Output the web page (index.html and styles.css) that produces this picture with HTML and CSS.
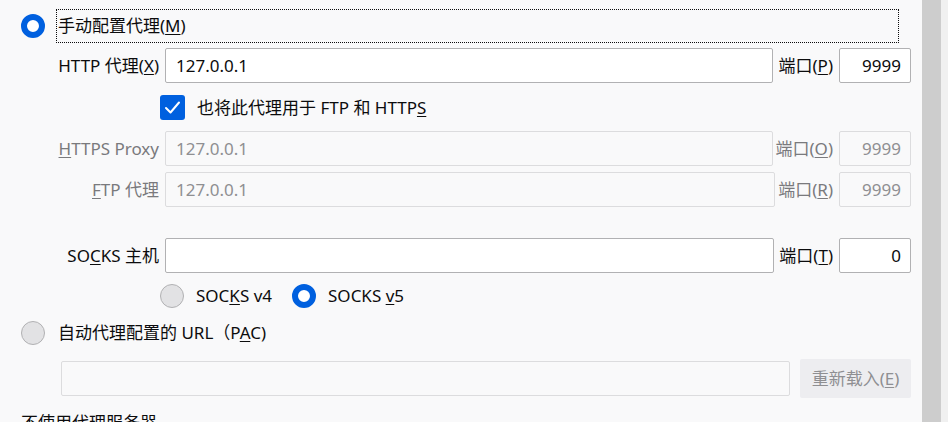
FILE: index.html
```html
<!DOCTYPE html>
<html lang="zh-CN">
<head>
<meta charset="utf-8">
<link rel="stylesheet" href="styles.css">
</head>
<body>
<div class="page">
  <div class="content">
    <div class="opt-row first">
      <span class="radio on"></span>
      <span class="focus-label">手动配置代理(<u>M</u>)</span>
    </div>

    <div class="field-row r-http">
      <label class="lbl">HTTP 代理(<u>X</u>)</label>
      <div class="input">127.0.0.1</div>
      <label class="plbl">端口(<u>P</u>)</label>
      <div class="input port">9999</div>
    </div>

    <div class="check-row">
      <span class="check">
        <svg width="17" height="15" viewBox="0 0 17 15"><path d="M2 8 L6.5 12.5 L15 2.5" fill="none" stroke="#fff" stroke-width="2" stroke-linecap="round" stroke-linejoin="round"/></svg>
      </span>
      <span>也将此代理用于 FTP 和 HTTP<u>S</u></span>
    </div>

    <div class="field-row r-https disabled">
      <label class="lbl"><u>H</u>TTPS Proxy</label>
      <div class="input">127.0.0.1</div>
      <label class="plbl">端口(<u>O</u>)</label>
      <div class="input port">9999</div>
    </div>

    <div class="field-row r-ftp disabled">
      <label class="lbl"><u>F</u>TP 代理</label>
      <div class="input">127.0.0.1</div>
      <label class="plbl">端口(<u>R</u>)</label>
      <div class="input port">9999</div>
    </div>

    <div class="field-row r-socks">
      <label class="lbl">SO<u>C</u>KS 主机</label>
      <div class="input"></div>
      <label class="plbl">端口(<u>T</u>)</label>
      <div class="input port">0</div>
    </div>

    <div class="socks-row">
      <span class="radio"></span>
      <span class="rtext">SOC<u>K</u>S v4</span>
      <span class="radio on"></span>
      <span class="rtext">SOCKS <u>v</u>5</span>
    </div>

    <div class="opt-row pac">
      <span class="radio"></span>
      <span class="plain-label">自动代理配置的 URL（P<u>A</u>C)</span>
    </div>

    <div class="pac-row">
      <div class="input dis-input"></div>
      <div class="btn">重新载入(<u>E</u>)</div>
    </div>

    <div class="cut-row">不使用代理服务器</div>
  </div>
  <div class="scrollbar"><div class="thumb"></div></div>
</div>
</body>
</html>
```

FILE: styles.css
```css
html, body {
  margin: 0;
  padding: 0;
  background: #f9f9fa;
  height: 422px;
  overflow: hidden;
}
body {
  font-family: "Noto Sans", "Noto Sans CJK SC", sans-serif;
  font-size: 17px;
  line-height: 22px;
  color: #0c0c0d;
}
u { text-decoration-thickness: 1px; text-underline-offset: 2px; }

.page {
  display: flex;
  width: 948px;
  height: 422px;
}
.content {
  width: 911px;
  padding-left: 21px;
  padding-top: 9px;
  box-sizing: border-box;
  flex: none;
}
.scrollbar {
  margin-left: 11px;
  width: 26px;
  background: #f0f0f0;
  display: flex;
}
.thumb {
  width: 19px;
  background: #cdcdcd;
}

.radio {
  width: 24px;
  height: 24px;
  border-radius: 50%;
  box-sizing: border-box;
  border: 1px solid #b1b1b3;
  background: #e2e2e4;
  flex: none;
  display: inline-block;
}
.radio.on {
  border: 6px solid #0060df;
  background: #fff;
}

.opt-row {
  display: flex;
  align-items: center;
  height: 34px;
}
.opt-row .radio { margin-right: 11px; }
.focus-label {
  flex: 1;
  height: 34px;
  box-sizing: border-box;
  border: 1px dotted #0c0c0d;
  display: flex;
  align-items: center;
  padding-left: 1px;
  margin-right: 12px;
}
.plain-label { padding-left: 2px; }

.field-row {
  display: flex;
  align-items: center;
  height: 35px;
}
.r-http { margin-top: 5px; }
.r-https { margin-top: 11px; }
.r-ftp { margin-top: 6px; }
.r-socks { margin-top: 31px; }

.lbl {
  width: 138px;
  text-align: right;
  margin-right: 6px;
  flex: none;
  white-space: nowrap;
}
.input {
  flex: 1;
  height: 35px;
  box-sizing: border-box;
  border: 1px solid #b1b1b3;
  border-radius: 2px;
  background: #fff;
  padding-left: 10px;
  display: flex;
  align-items: center;
}
.input.port {
  flex: none;
  width: 72px;
  justify-content: flex-end;
  padding-left: 0;
  padding-right: 9px;
}
.plbl {
  margin: 0 6px 0 5px;
  flex: none;
}
.disabled { color: #8f8f92; }
.disabled .plbl { margin-left: 3px; }
.disabled .input {
  border-color: #dcdcde;
  background: #f9f9fa;
}
.disabled .lbl, .disabled .plbl { color: #7a7a7d; }

.check-row {
  display: flex;
  align-items: center;
  height: 25px;
  margin-top: 12px;
  padding-left: 139px;
}
.check {
  width: 25px;
  height: 25px;
  box-sizing: border-box;
  background: #0060df;
  border-radius: 3px;
  display: flex;
  align-items: center;
  justify-content: center;
  margin-right: 12px;
}

.socks-row {
  display: flex;
  align-items: center;
  height: 24px;
  margin-top: 11px;
  padding-left: 139px;
}
.socks-row .radio { margin-right: 12px; }
.rtext { margin-right: 20px; }

.pac { margin-top: 8px; height: 34px; }

.pac-row {
  display: flex;
  align-items: center;
  margin-top: 9px;
  padding-left: 40px;
}
.dis-input {
  height: 35px;
  border-color: #dcdcde;
  background: #f9f9fa;
  margin-right: 10px;
}
.btn {
  width: 111px;
  height: 39px;
  border-radius: 2px;
  background: #ededf0;
  color: #8f8f92;
  display: flex;
  align-items: center;
  justify-content: center;
  flex: none;
}
.cut-row {
  margin-top: 14px;
  padding-left: 0;
}
```
